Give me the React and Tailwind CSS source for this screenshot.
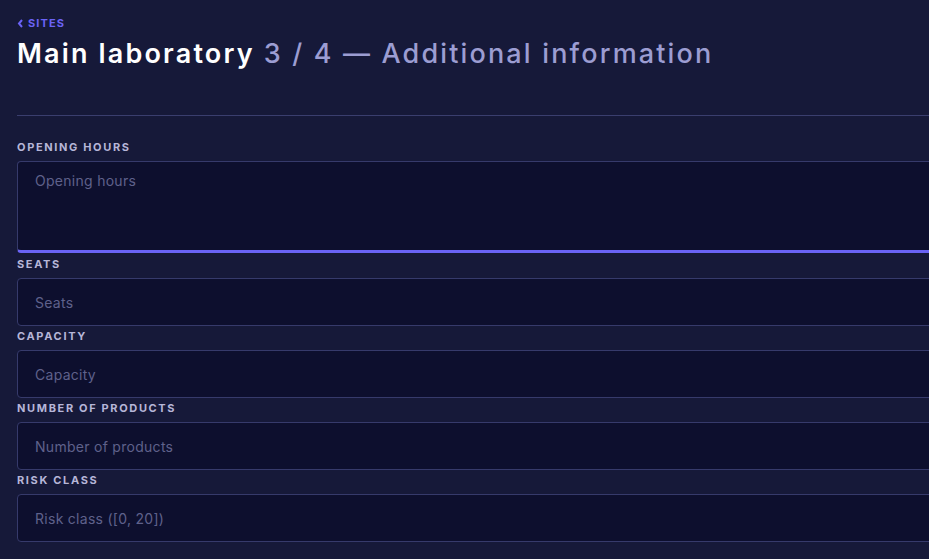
import React from "react";

const fields = [
  { label: "Seats", placeholder: "Seats" },
  { label: "Capacity", placeholder: "Capacity" },
  { label: "Number of products", placeholder: "Number of products" },
  { label: "Risk class", placeholder: "Risk class ([0, 20])" },
];

export default function App() {
  return (
    <div
      className="min-h-screen bg-[#161939] overflow-hidden"
      style={{ fontFamily: "Inter, 'Noto Sans', sans-serif" }}
    >
      <div className="pl-[17px] mr-[-40px] pt-[16px]">
        <a className="flex items-center gap-[4px] text-[11px] font-bold tracking-[0.1em] text-[#6b63f6] h-[14px]">
          <svg width="7" height="9" viewBox="0 0 7 9">
            <path d="M5 1 L2 4.5 L5 8" stroke="#6b63f6" strokeWidth="2" fill="none" />
          </svg>
          SITES
        </a>
        <h1 className="mt-[7px] text-[27px] font-semibold leading-[34px] tracking-[0.08em] text-white">
          Main laboratory <span className="text-[#9c9dd2] font-medium">3 / 4 — Additional information</span>
        </h1>
        <div className="mt-[44px] h-px bg-[#3a3e6e]" />

        <label className="block mt-[24px] text-[11px] font-bold tracking-[0.15em] uppercase text-[#b6b6d8] leading-[14px]">
          Opening hours
        </label>
        <textarea
          placeholder="Opening hours"
          className="block mt-[7px] w-full h-[92px] resize-none rounded-[4px] border border-[#363a6b] border-b-[3px] border-b-[#6a63f5] bg-[#0d0f2e] px-[17px] py-[8px] text-[14px] tracking-[0.02em] text-white placeholder:text-[#5f618b] outline-none"
        />

        {fields.map((f, i) => (
          <div key={f.label}>
            <label
              className={`block text-[11px] font-bold tracking-[0.15em] uppercase text-[#b6b6d8] leading-[14px] ${
                i === 0 ? "mt-[4px]" : "mt-[3px]"
              }`}
            >
              {f.label}
            </label>
            <input
              placeholder={f.placeholder}
              className="block mt-[7px] w-full h-[48px] rounded-[4px] border border-[#363a6b] bg-[#0d0f2e] px-[17px] text-[14px] tracking-[0.02em] text-white placeholder:text-[#5f618b] outline-none"
            />
          </div>
        ))}
      </div>
    </div>
  );
}
